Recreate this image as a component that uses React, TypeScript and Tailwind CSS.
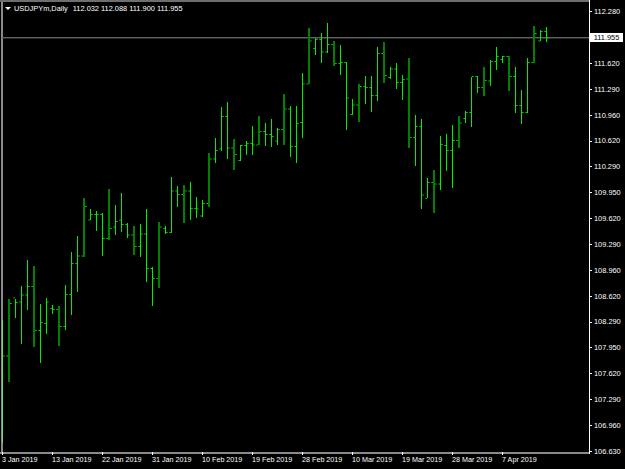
const FONT = "font-['Liberation_Sans',Arial,sans-serif]";

// high, low, open, close in picture pixels (y). x.5 = crisp row, whole number = dim 2px row
const BARS: number[][] = [
  [320, 443, 0, 356], [299, 382, 356, 303.5], [299, 318, 298, 302.5], [286, 344, 302, 295],
  [260, 310, 295, 286.5], [266, 347, 286.5, 330.5], [304, 363, 330.5, 322.5], [298, 334, 323.5, 302],
  [305, 314, 308.5, 309.5], [306, 346, 309.5, 326.5], [285, 330, 326.5, 294.5], [252, 315, 294.5, 263.5],
  [236, 292, 263.5, 256], [198, 257, 256, 206.5], [209, 220, 220, 214.5], [211, 231, 214.5, 214.5],
  [213, 256, 214.5, 238.5], [189, 240, 238.5, 228.5], [205, 235, 227, 221.5], [193, 232, 220, 224.5],
  [223, 238, 224.5, 235], [226, 255, 235, 246.5], [224, 257, 246.5, 234], [209, 282, 234, 268.5],
  [267, 306, 268.5, 278.5], [222, 288, 278.5, 227], [226, 234, 228.5, 232.5], [177, 233, 232.5, 191],
  [186, 207, 191, 194.5], [185, 223, 194.5, 191], [182, 220, 191, 208.5], [197, 218, 208.5, 209],
  [200, 217, 216, 203.5], [153, 207, 203.5, 159], [138, 163, 159, 150.5], [107, 151, 149, 116.5],
  [102, 159, 116.5, 148], [139, 170, 148, 154.5], [145, 161, 160.5, 145.5], [141, 155, 145.5, 143.5],
  [126, 155, 143.5, 145], [116, 145, 145, 131.5], [123, 146, 131.5, 134.5], [119, 147, 134.5, 136.5],
  [128, 145, 141, 129.5], [94, 145, 129.5, 109], [106, 157, 109, 146.5], [106, 163, 146.5, 123.5],
  [73, 138, 122.5, 84], [28, 84, 84, 41], [38, 55, 48.5, 39.5], [33, 63, 39.5, 52],
  [23, 53, 52, 44.5], [41, 66, 44.5, 63.5], [45, 75, 63.5, 62.5], [62, 130, 62.5, 98],
  [99, 115, 114.5, 105], [84, 122, 105, 86.5], [76, 104, 86.5, 87.5], [76, 112, 87.5, 95.5],
  [47, 101, 95.5, 53.5], [42, 83, 53.5, 75.5], [67, 79, 77.5, 69], [63, 89, 69, 82.5],
  [75, 100, 82.5, 79.5], [58, 148, 79, 137.5], [115, 166, 137.5, 126.5], [119, 209, 126.5, 195],
  [178, 198, 198.5, 182.5], [170, 213, 182.5, 184], [136, 190, 184, 144.5], [134, 171, 145.5, 150.5],
  [125, 188, 150.5, 140.5], [116, 148, 140.5, 123], [111, 123, 118.5, 112.5], [77, 127, 112.5, 76.5],
  [76, 93, 76.5, 87.5], [67, 96, 87.5, 80.5], [60, 86, 81, 61.5], [47, 70, 61.5, 56.5],
  [56, 63, 59.5, 56.5], [56, 91, 56.5, 76.5], [67, 113, 76.5, 105.5], [90, 124, 105.5, 112.5],
  [58, 113, 112.5, 62.5], [26, 63, 62.5, 33.5], [30, 41, 41, 31.5], [27, 42, 31.5, 38],
];

const PRICES = [
  "112.280", "", "111.620", "111.290", "110.960", "110.620", "110.290", "109.950", "109.620",
  "109.290", "108.960", "108.620", "108.290", "107.950", "107.620", "107.290", "106.960", "106.630",
];

const DATES = [
  "3 Jan 2019", "13 Jan 2019", "22 Jan 2019", "31 Jan 2019", "10 Feb 2019", "19 Feb 2019",
  "28 Feb 2019", "10 Mar 2019", "19 Mar 2019", "28 Mar 2019", "7 Apr 2019",
];

const barLeft = (i: number) => [2, 8, 15, 21][i % 4] + 25 * Math.floor(i / 4);

function Bars() {
  return (
    <svg className="block" width={590} height={454} viewBox="0 0 590 454">
      <rect x={2} y={37} width={587} height={1.4} fill="#5c6468" />
      {BARS.map(([hi, lo, open, close], i) => {
        const left = barLeft(i);
        const thick = i % 4 === 1;
        const w = thick ? 2 : 1;
        const color = i === 0 ? "#66dd66" : thick ? "#007f00" : "#00ee00";
        return (
          <g key={i}>
            <rect x={left} y={hi} width={w} height={lo - hi} fill={color} />
            {open > 0 && <rect x={left - 1.7} y={open - 0.5} width={1.7} height={1} fill="#00c800" />}
            <rect x={left + w} y={close - 0.5} width={1.7} height={1} fill="#00c800" />
          </g>
        );
      })}
    </svg>
  );
}

export default function App() {
  return (
    <div className={`w-[625px] h-[469px] bg-black overflow-hidden flex flex-col text-[7.4px] leading-none text-white ${FONT}`}>
      <div className="flex h-[454px]">
        <div className="relative w-[590px] border-r border-white">
          <div className="absolute left-[1px] top-0 bottom-0 w-[2px] bg-[#8a8a8a]" />
          <div className="absolute left-0 right-0 top-0 h-[2px] bg-[#6e6e6e]" />
          <div className="absolute left-0 right-0 bottom-0 h-[2px] bg-[#8a8a8a]" />
          <div className="absolute">
            <Bars />
          </div>
          <div className="absolute left-[5px] top-[5px] flex items-center h-[7px]">
            <svg width="6" height="3" viewBox="0 0 6 3" className="mr-[3px]">
              <path d="M0 0H6L3 3Z" fill="#fff" />
            </svg>
            <span className="mr-[5px]">USDJPYm,Daily</span>
            <span>112.032 112.088 111.900 111.955</span>
          </div>
        </div>
        <div className="relative flex-1 flex flex-col">
          {PRICES.map((p, i) => (
            <div key={i} className="h-[25.85px] flex items-center shrink-0 -translate-y-[1px]">
              {p && <div className="w-[2px] h-px bg-white" />}
              {p && <span className="ml-[2px]">{p}</span>}
            </div>
          ))}
          <div className="absolute left-0 top-[33px] w-[33px] h-[9px] bg-white text-black flex items-center justify-center">
            111.955
          </div>
        </div>
      </div>
      <div className="flex pl-[2px] h-[15px] text-[7.2px]">
        {DATES.map((d) => (
          <div key={d} className="w-[50px] shrink-0 relative pt-[2px] whitespace-nowrap">
            <div className="absolute left-0 -top-[2px] w-px h-[3px] bg-white" />
            {d}
          </div>
        ))}
      </div>
    </div>
  );
}
